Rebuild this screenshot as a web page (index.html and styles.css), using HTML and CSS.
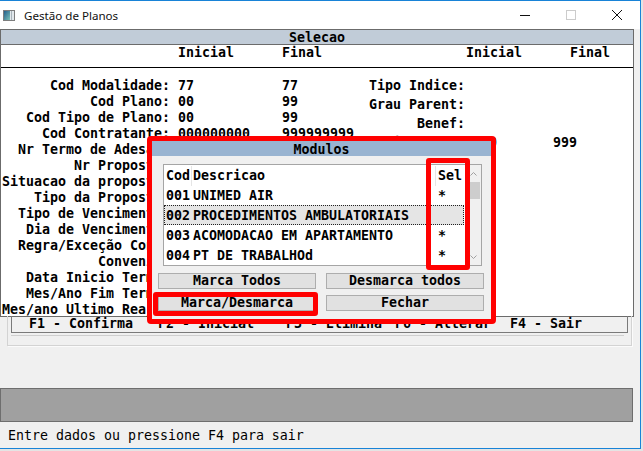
FILE: index.html
```html
<!DOCTYPE html>
<html lang="pt">
<head>
<meta charset="UTF-8">
<title>Gestão de Planos</title>
<link rel="stylesheet" href="styles.css">
</head>
<body>
<div class="window">
  <div class="titlebar">
    <svg class="app-icon" width="12" height="11" viewBox="0 0 12 11">
      <defs>
        <linearGradient id="g" x1="0" y1="0" x2="1" y2="1">
          <stop offset="0" stop-color="#245f8c"/>
          <stop offset="1" stop-color="#7cc2b8"/>
        </linearGradient>
      </defs>
      <rect x="0.5" y="0.5" width="11" height="10" fill="#e2e8ec" stroke="#7d7d7d"/>
      <rect x="1" y="1" width="6" height="9" fill="url(#g)"/>
      <rect x="8" y="1" width="1" height="9" fill="#a9b4bb"/>
    </svg>
    <span class="title">Gestão de Planos</span>
    <span class="spacer"></span>
    <span class="ctl"><svg width="10" height="10" viewBox="0 0 10 10"><path d="M0 5.5H10" stroke="#111" stroke-width="1"/></svg></span>
    <span class="ctl"><svg width="10" height="10" viewBox="0 0 10 10"><rect x="0.5" y="0.5" width="9" height="9" fill="none" stroke="#cccccc"/></svg></span>
    <span class="ctl"><svg width="10" height="10" viewBox="0 0 10 10"><path d="M0 0L10 10M10 0L0 10" stroke="#111" stroke-width="1"/></svg></span>
  </div>

  <div class="sel-head">Selecao</div>
  <div class="panel">
    <div class="cols">
      <span></span><span>Inicial</span><span>Final</span><span>Inicial</span><span>Final</span>
    </div>
    <div class="rule"></div>
    <div class="fields">
      <div class="left">
        <span class="lbl">Cod Modalidade:</span><span class="val">77</span><span>77</span>
        <span class="lbl">Cod Plano:</span><span class="val">00</span><span>99</span>
        <span class="lbl">Cod Tipo de Plano:</span><span class="val">00</span><span>99</span>
        <span class="lbl">Cod Contratante:</span><span class="val">000000000</span><span>999999999</span>
        <span class="lbl">Nr Termo de Adesao:</span><span class="val">000000</span><span>999999</span>
        <span class="lbl">Nr Proposta:</span><span class="val">00000000</span><span>99999999</span>
        <span class="lbl">Situacao da proposta:</span><span class="val">0</span><span>9</span>
        <span class="lbl">Tipo da Proposta:</span><span class="val">0</span><span>9</span>
        <span class="lbl">Tipo de Vencimento:</span><span class="val">0</span><span>9</span>
        <span class="lbl">Dia de Vencimento:</span><span class="val">01</span><span>31</span>
        <span class="lbl">Regra/Exceção Cont:</span><span class="val">0</span><span>9</span>
        <span class="lbl">Convenio:</span><span class="val">000</span><span>999</span>
        <span class="lbl">Data Inicio Termo:</span><span class="val">01/01/00</span><span>31/12/99</span>
        <span class="lbl">Mes/Ano Fim Termo:</span><span class="val">01/00</span><span>12/99</span>
        <span class="lbl">Mes/ano Ultimo Reaj.:</span><span class="val">01/00</span><span>12/99</span>
      </div>
      <div class="right">
        <span class="lbl">Tipo Indice:</span><span class="val"></span><span></span>
        <span class="lbl">Grau Parent:</span><span class="val"></span><span></span>
        <span class="lbl">Benef:</span><span class="val"></span><span></span>
        <span class="lbl">Faixa Etar:</span><span class="val">000</span><span>999</span>
      </div>
    </div>
  </div>

  <div class="frame">
    <div class="fbar-wrap">
      <div class="fbar">
        <span>F1 - Confirma</span>
        <span>F2 - Inicial</span>
        <span>F3 - Elimina</span>
        <span>F6 - Alterar</span>
        <span>F4 - Sair</span>
      </div>
    </div>
  </div>

  <div class="msgbar"></div>
  <div class="status">Entre dados ou pressione F4 para sair</div>

  <div class="modal">
    <div class="modal-title">Modulos</div>
    <div class="list">
      <div class="list-main">
        <div class="lrow lhead"><span class="c1">Cod</span><span class="c2">Descricao</span><span class="c3">Sel</span></div>
        <div class="lrow"><span class="c1">001</span><span class="c2">UNIMED AIR</span><span class="c3">*</span></div>
        <div class="lrow current"><span class="c1">002</span><span class="c2">PROCEDIMENTOS AMBULATORIAIS</span><span class="c3"></span></div>
        <div class="lrow"><span class="c1">003</span><span class="c2">ACOMODACAO EM APARTAMENTO</span><span class="c3">*</span></div>
        <div class="lrow"><span class="c1">004</span><span class="c2">PT DE TRABALHOd</span><span class="c3">*</span></div>
      </div>
      <div class="scroll">
        <div class="arrow"><svg width="7" height="4" viewBox="0 0 7 4"><path d="M0.5 3.5L3.5 0.5L6.5 3.5" fill="none" stroke="#a0a0a0"/></svg></div>
        <div class="thumb"></div>
        <div class="track"></div>
        <div class="arrow"><svg width="7" height="4" viewBox="0 0 7 4"><path d="M0.5 0.5L3.5 3.5L6.5 0.5" fill="none" stroke="#a0a0a0"/></svg></div>
      </div>
      <div class="mark-sel"></div>
    </div>
    <div class="btns">
      <button>Marca Todos</button>
      <button>Desmarca todos</button>
      <button class="marked">Marca/Desmarca</button>
      <button>Fechar</button>
    </div>
  </div>
</div>
</body>
</html>
```

FILE: styles.css
```css
* {
  box-sizing: border-box;
}
body {
  margin: 0;
  width: 643px;
  height: 451px;
  overflow: hidden;
  background: #e4e4e4;
}
.window {
  position: relative;
  width: 641px;
  height: 449px;
  border: 1px solid #1883d7;
  border-left: none;
  background: #f0f0f0;
  display: flex;
  flex-direction: column;
  font-family: "DejaVu Sans Mono", monospace;
  font-size: 13.29px;
  font-weight: bold;
  color: #000;
}

/* window caption */
.titlebar {
  height: 28px;
  flex: none;
  background: #fff;
  display: flex;
  align-items: center;
  padding-left: 3px;
  font-family: "Noto Sans", sans-serif;
  font-size: 11.6px;
  font-weight: normal;
  color: #111;
}
.app-icon {
  display: block;
  margin-right: 9px;
}
.spacer {
  flex: 1;
}
.ctl {
  width: 46px;
  display: flex;
  justify-content: center;
}
.ctl svg {
  display: block;
}

/* Selecao panel */
.sel-head {
  width: 634px;
  height: 16px;
  flex: none;
  border: 1px solid #6b6b6b;
  background: #c1ccd8;
  text-align: center;
  padding-top: 1px;
  line-height: 14px;
}
.panel {
  width: 634px;
  height: 272px;
  flex: none;
  border: 1px solid #6b6b6b;
  border-top: none;
  background: #fff;
  white-space: nowrap;
}
.cols {
  display: grid;
  grid-template-columns: 177px 104px 184px 104px auto;
  height: 16px;
  line-height: 16px;
}
.rule {
  margin-top: 6px;
  border-top: 1px solid #000;
  height: 11px;
}
.fields {
  display: flex;
}
.left {
  display: grid;
  grid-template-columns: 169px 112px 87px;
  grid-auto-rows: 16px;
  line-height: 16px;
}
.right {
  display: grid;
  grid-template-columns: 96px 88px auto;
  grid-auto-rows: 19px;
  line-height: 16px;
}
.lbl {
  text-align: right;
}
.val {
  padding-left: 8px;
}

/* function key bar */
.frame {
  flex: none;
  margin: -1px 8px 0 7px;
  border: 1px solid #d3d3d3;
  border-top: none;
  box-shadow: 1px 1px 0 #fbfbfb;
  padding: 0 3px 9px 3px;
}
.fbar-wrap {
  padding-bottom: 2px;
  border-bottom: 1px solid #cfcfcf;
  margin-right: 4px;
}
.fbar {
  height: 17px;
  margin-right: -4px;
  border: 1px solid #7a7a7a;
  border-top: none;
  line-height: 16px;
  display: grid;
  grid-template-columns: 129px 128px 109px 115px auto;
  padding-left: 17px;
  white-space: nowrap;
}

.msgbar {
  flex: none;
  margin: 42px 7px 0 0;
  height: 34px;
  border: 1px solid #6e6e6e;
  background: #a0a0a0;
}
.status {
  padding: 6px 0 0 8px;
  line-height: 16px;
  font-weight: normal;
}

/* Modulos dialog */
.modal {
  position: absolute;
  left: 147px;
  top: 135px;
  width: 349px;
  height: 188px;
  border: 5px solid #f00;
  border-radius: 4px;
  background: #f0f0f0;
}
.modal-title {
  height: 15px;
  padding-top: 1px;
  line-height: 15px;
  background: #99b4d1;
  text-align: center;
}
.list {
  position: relative;
  display: flex;
  width: 319px;
  height: 102px;
  margin: 8px 0 0 11px;
  border: 1px solid #a5a5a5;
  background: #fff;
  white-space: nowrap;
}
.list-main {
  width: 301px;
}
.lrow {
  display: grid;
  grid-template-columns: 28px 244px 29px;
  height: 20px;
  padding-top: 1px;
  line-height: 20px;
}
.lrow .c1 {
  padding-left: 2px;
}
.lrow .c2 {
  padding-left: 1px;
  overflow: hidden;
}
.lrow .c3 {
  padding-left: 2px;
}
.lhead .c1,
.lhead .c2 {
  border-right: 1px solid #e5e5e5;
}
.current {
  background: #e5e5e5;
  outline: 1px dotted #222;
  outline-offset: -1px;
  margin-right: 1px;
}
.scroll {
  width: 16px;
  background: #f0f0f0;
  display: flex;
  flex-direction: column;
}
.arrow {
  height: 17px;
  display: flex;
  align-items: center;
  justify-content: center;
}
.arrow svg {
  display: block;
}
.thumb {
  height: 17px;
  margin: 0 1px;
  background: #cdcdcd;
}
.track {
  flex: 1;
}
.mark-sel {
  position: absolute;
  left: 262px;
  top: -7px;
  width: 44px;
  height: 112px;
  border: 5px solid #f00;
  border-radius: 3px;
}
.btns {
  display: grid;
  grid-template-columns: 1fr 1fr;
  column-gap: 10px;
  row-gap: 6px;
  margin: 7px 7px 0 6px;
}
.btns button {
  position: relative;
  height: 16px;
  padding: 0;
  border: 1px solid #adadad;
  background: #e1e1e1;
  font: inherit;
  line-height: 14px;
  color: #000;
}
.marked::after {
  content: "";
  position: absolute;
  top: -4px;
  left: -6px;
  right: -3px;
  bottom: -6px;
  border: 5px solid #f00;
  border-radius: 3px;
}
```
